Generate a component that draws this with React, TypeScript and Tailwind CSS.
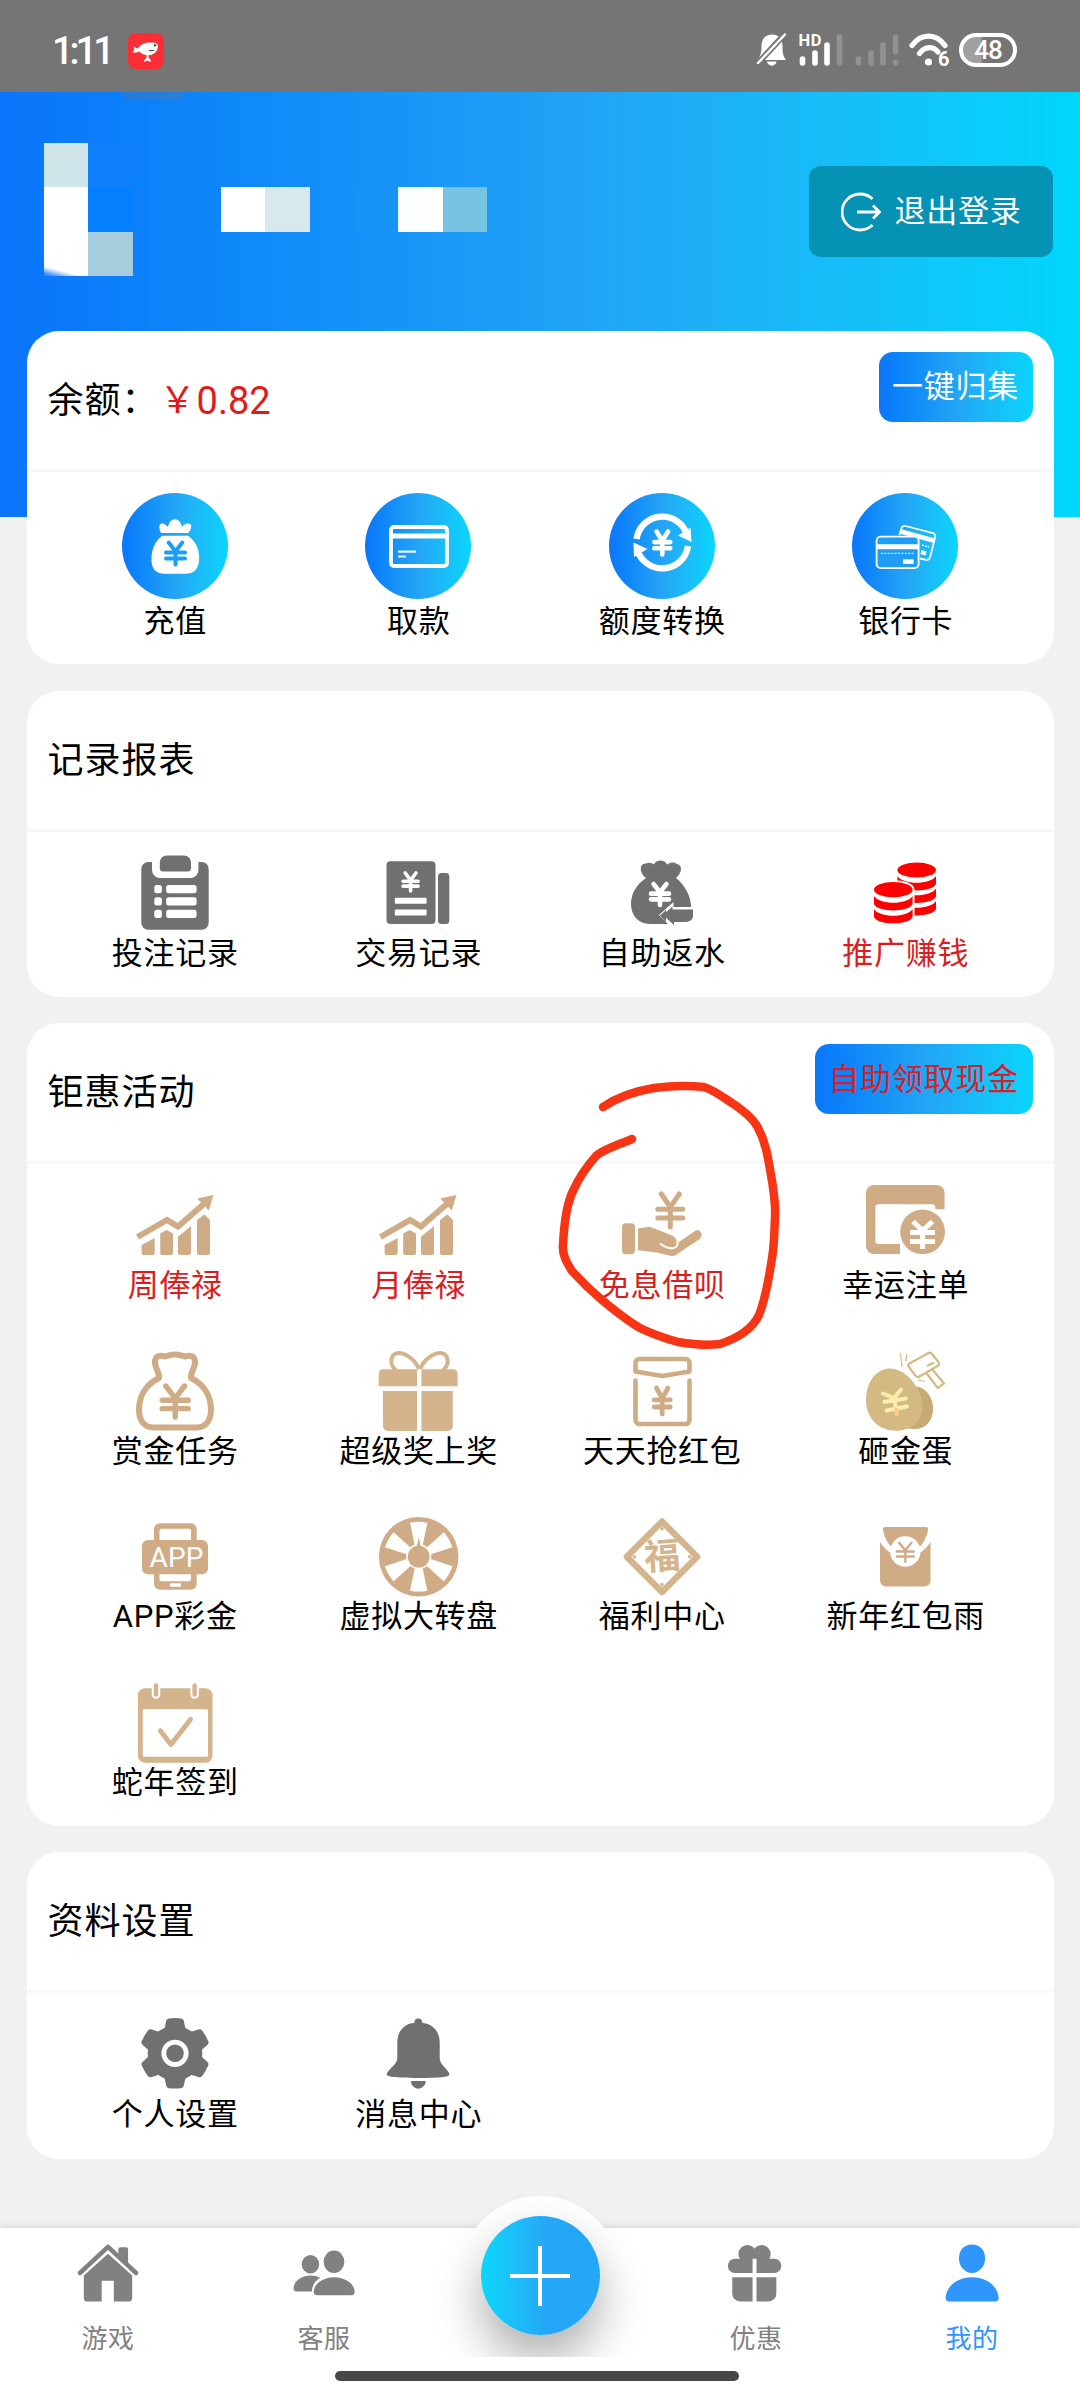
import type { ReactNode } from 'react'

const GRAY = '#707070'
const TAN = '#d0ac86'
const SAND = '#d4b48c'

type Item = { label: string; icon: ReactNode; red?: boolean }

// yen sign drawn as strokes: arms, stem and two bars
function Yen({
  x,
  y,
  w,
  h,
  color,
  stroke,
}: {
  x: number
  y: number
  w: number
  h: number
  color: string
  stroke: number
}) {
  const arm = w * 0.36
  return (
    <path
      d={`M${x - arm} ${y}L${x} ${y + h * 0.4}L${x + arm} ${y}M${x} ${y + h * 0.4}V${y + h}M${x - w / 2} ${y + h * 0.46}H${x + w / 2}M${x - w / 2} ${y + h * 0.73}H${x + w / 2}`}
      stroke={color}
      strokeWidth={stroke}
      strokeLinecap="round"
      strokeLinejoin="round"
      fill="none"
    />
  )
}

function Icon({ children, color = TAN }: { children: ReactNode; color?: string }) {
  return (
    <svg viewBox="0 0 80 80" className="h-20 w-20 overflow-visible" fill={color}>
      {children}
    </svg>
  )
}

function Disc({ children }: { children: ReactNode }) {
  return (
    <div className="h-[106px] w-[106px] rounded-full bg-linear-to-r from-[#0b76fb] via-[#24a4f5] to-[#08d6fb]">
      <svg viewBox="0 0 106 106" className="h-full w-full" fill="none">
        {children}
      </svg>
    </div>
  )
}

function ChartIcon() {
  return (
    <Icon>
      <path d="M2.5 54L32 37L43 43.5L70 20" fill="none" stroke={TAN} strokeWidth="6" />
      <path d="M78.5 12L73.8 27.5L62.2 15.5Z" />
      <path d="M6.6 62L19.7 55V70a2 2 0 0 1-2 2H8.6a2 2 0 0 1-2-2Z" />
      <path d="M25.2 50.5L31.6 47L38 50.5V70a2 2 0 0 1-2 2H27.2a2 2 0 0 1-2-2Z" />
      <path d="M43 53.7L56 43V70a2 2 0 0 1-2 2H45a2 2 0 0 1-2-2Z" />
      <path d="M62 37L69.3 31.5L75 37V70a2 2 0 0 1-2 2H64a2 2 0 0 1-2-2Z" />
    </Icon>
  )
}

function CoinStack({ x, y, bands }: { x: number; y: number; bands: number[] }) {
  return (
    <g>
      <ellipse cx={x} cy={y} rx="19.3" ry="7.6" />
      {bands.map((b) => (
        <path
          key={b}
          d={`M${x - 19.3} ${y + b}C${x - 14} ${y + b + 9} ${x + 14} ${y + b + 9} ${x + 19.3} ${y + b}V${y + b + 8}C${x + 16} ${y + b + 16.5} ${x - 16} ${y + b + 16.5} ${x - 19.3} ${y + b + 8}Z`}
        />
      ))}
    </g>
  )
}

const wallet: Item[] = [
  {
    label: '充值',
    icon: (
      <Disc>
        <path
          d="M39 40C36 34 37 29 42 31C44 32 45 33 46 34C47 29 50 26.3 53 26.3C56 26.3 59 29 60 34C62 31 66 29 69 32C70 35 68 38 66 40Z"
          fill="#fff"
        />
        <path
          d="M40 42.7H66C74 48 78 57 77 68C76 77 71 80.7 64 80.7H42C35 80.7 30 77 29.5 68C29 57 33 48 40 42.7Z"
          fill="#fff"
        />
        <Yen x={53.5} y={49.5} w={19} h={22} color="#1e9df6" stroke={4} />
      </Disc>
    ),
  },
  {
    label: '取款',
    icon: (
      <Disc>
        <rect x="26" y="34" width="56" height="39" rx="3" stroke="#fff" strokeWidth="3.8" />
        <path d="M25 43H82" stroke="#fff" strokeWidth="5" />
        <path d="M33 58.7H51M33 63.5H41" stroke="#e8f7ff" strokeWidth="2.2" />
      </Disc>
    ),
  },
  {
    label: '额度转换',
    icon: (
      <Disc>
        <path
          d="M27.6 46A26 26 0 0 1 78.2 42M79 53A26 26 0 0 1 28.4 57"
          stroke="#fff"
          strokeWidth="6.4"
        />
        <path d="M81.5 34.5L82.5 49L69 42.5ZM25 64L24.5 49.5L38.5 56Z" fill="#fff" />
        <Yen x={53.3} y={38.5} w={16} h={23} color="#fff" stroke={4.6} />
      </Disc>
    ),
  },
  {
    label: '银行卡',
    icon: (
      <Disc>
        <path
          d="M47.5 42L49.6 35Q50.6 32.2 53.5 33L81 40.2Q83.8 41.2 83.2 44L78 64.5Q77 67.5 74 66.8L68 65.5"
          stroke="#fff"
          strokeWidth="1.8"
        />
        <path d="M49 38.5L81.5 47.5" stroke="#fff" strokeWidth="4.6" />
        <path d="M70 52L77 54" stroke="#fff" strokeWidth="1.4" strokeDasharray="2 1" />
        <path d="M69 59L74 60.5" stroke="#fff" strokeWidth="4" />
        <rect x="24.6" y="43.7" width="42" height="31.4" rx="4" fill="#1f9df5" stroke="#fff" strokeWidth="1.8" />
        <path d="M24.6 53.8H66.6" stroke="#fff" strokeWidth="5" />
        <path d="M29 60.3H62" stroke="#d8f0ff" strokeWidth="1.2" strokeDasharray="2 1.4" />
        <path d="M51 68.6H61.6" stroke="#fff" strokeWidth="4.6" />
      </Disc>
    ),
  },
]

const records: Item[] = [
  {
    label: '投注记录',
    icon: (
      <Icon color={GRAY}>
        <rect x="6.3" y="11" width="67.4" height="67.7" rx="7" />
        <path d="M17 9H63.4V19a8 8 0 0 1-8 8H25a8 8 0 0 1-8-8Z" fill="#fff" />
        <path d="M24.8 11a7 7 0 0 1 7-6.5H49a7 7 0 0 1 7 6.5V17a3.5 3.5 0 0 1-3.5 3.5H28.3A3.5 3.5 0 0 1 24.8 17Z" />
        {[34, 46.3, 58.7].map((y) => (
          <g key={y} fill="#fff">
            <rect x="19.3" y={y} width="7.6" height="8.2" rx="2.5" />
            <rect x="31.2" y={y} width="30.4" height="8.2" rx="2.5" />
          </g>
        ))}
      </Icon>
    ),
  },
  {
    label: '交易记录',
    icon: (
      <Icon color={GRAY}>
        <rect x="8.5" y="10.3" width="49" height="62.7" rx="4" />
        <rect x="60" y="22" width="11.3" height="51" rx="3.5" />
        <Yen x={32.6} y={22} w={15} h={18} color="#fff" stroke={3.6} />
        <rect x="16.8" y="46.8" width="31.8" height="6" rx="1" fill="#fff" />
        <rect x="16.8" y="58.5" width="31.8" height="6" rx="1" fill="#fff" />
      </Icon>
    ),
  },
  {
    label: '自助返水',
    icon: (
      <Icon color={GRAY}>
        <path d="M24 27C17 22 17 12 24 12.5C28 10.5 31 13 32 13.5C34 8 43 8 45 13.5C49 10.5 53 11 55 13C61 14 60 22 54 27C63 34 69 46 69 55C69 67 61 73 50 73H28C16 73 9 64 9 53C9 42 15 33 24 27Z" />
        <Yen x={38} y={33} w={18} h={21} color="#fff" stroke={4.6} />
        {/* return arrow, outlined in white over the bag */}
        <path d="M37 64L51.5 51V56H73V76H49Z" fill="#fff" />
        <path d="M41 64L50.5 55.5V58.5H71V66Q70 71 62 71H52V74Z" />
        <path d="M38 64.5L44 59V71Z" />
      </Icon>
    ),
  },
  {
    label: '推广赚钱',
    red: true,
    icon: (
      <Icon color="#fe0000">
        <CoinStack x={51.7} y={19} bands={[6, 18.5, 31]} />
        <path d="M7 38.5C7 26 49.5 26 49.5 38.5V68C49.5 78 7 78 7 68Z" fill="#fff" />
        <CoinStack x={28.3} y={38.7} bands={[6.4, 19.2]} />
      </Icon>
    ),
  },
]

const activities: Item[] = [
  { label: '周俸禄', red: true, icon: <ChartIcon /> },
  { label: '月俸禄', red: true, icon: <ChartIcon /> },
  {
    label: '免息借呗',
    red: true,
    icon: (
      <Icon>
        <Yen x={48.3} y={11} w={25} h={33} color={TAN} stroke={5} />
        <rect x="0" y="40.3" width="13" height="31" rx="4" />
        <path d="M16 45.5L27.6 43.7Q40 48 51 53Q55 56 55.5 60L73 48Q77 45.5 79.3 50Q80.5 54 77 56.5L54 72Q52 73.3 49 73L35 69.5L16 67.3Z" />
        <path d="M55.3 57.5C57.5 67 47 67.5 38 60.5" fill="none" stroke="#fff" strokeWidth="2" />
      </Icon>
    ),
  },
  {
    label: '幸运注单',
    icon: (
      <Icon>
        <path d="M9 2H71.6a8 8 0 0 1 8 8V26.3H70.3V24.3a3 3 0 0 0-3-3H13.4a3 3 0 0 0-3 3V58a3 3 0 0 0 3 3H35V71H9a8 8 0 0 1-8-8V10a8 8 0 0 1 8-8Z" />
        <circle cx="57.6" cy="48.9" r="22.4" />
        <path
          d="M48 38.5L57.6 47.5L67.5 38.5M57.6 47V66M45 49.5H70M45 58.5H70"
          fill="none"
          stroke="#fff"
          strokeWidth="5"
        />
      </Icon>
    ),
  },
  {
    label: '赏金任务',
    icon: (
      <Icon>
        <path
          d="M24 29C14 34 4 44 4 61C4 72 10 78.5 18 78.5H62C70 78.5 76 72 76 61C76 44 66 34 56 29C55.5 22 61 18 60 12C59 6 54 6 50 7.5C46 6.5 44 5.5 40 5.5C36 5.5 34 6.5 30 7.5C26 6 21 6 20 12C19 18 24.5 22 24 29Z"
          fill="none"
          stroke={TAN}
          strokeWidth="6"
          strokeLinejoin="round"
        />
        <Yen x={40.2} y={37} w={26} h={31} color={TAN} stroke={5.4} />
      </Icon>
    ),
  },
  {
    label: '超级奖上奖',
    icon: (
      <Icon color={SAND}>
        <path
          d="M41 20C36 9 26 3.5 20 4C12 5 11 16 18 21M42 20C47 9 57 3.5 63 4C71 5 72 16 65 21"
          fill="none"
          stroke={SAND}
          strokeWidth="4"
        />
        <path d="M39 20.3H5a4.3 4.3 0 0 0-4.3 4.3V37.3H39ZM43.4 20.3H75.3a4.3 4.3 0 0 1 4.3 4.3V37.3H43.4Z" />
        <path d="M39 42H4.9V77a5 5 0 0 0 5 5H39ZM43.4 42H74.8V77a5 5 0 0 1-5 5H43.4Z" />
      </Icon>
    ),
  },
  {
    label: '天天抢红包',
    icon: (
      <Icon>
        <path
          d="M13.5 22.5V14a4 4 0 0 1 4-4H63.5a4 4 0 0 1 4 4V22.5L40.5 27ZM13.5 31.5V71a4 4 0 0 0 4 4H63.5a4 4 0 0 0 4-4V31.5"
          fill="none"
          stroke={TAN}
          strokeWidth="4.6"
          strokeLinecap="round"
          strokeLinejoin="round"
        />
        <Yen x={40.2} y={39} w={16} h={26} color={TAN} stroke={4.8} />
      </Icon>
    ),
  },
  {
    label: '砸金蛋',
    icon: (
      <Icon color="#d3ba83">
        <path d="M48 38C60 36 68 48 68 60C68 72 60 81 48 80L38 79Z" fill="#c7a975" />
        <path d="M21 20C36 17 52 32 57 52C60 68 50 81 32 81.7C14 82 2 70 1 53C0.5 36 8 23 21 20Z" />
        <path
          d="M18 44.5L29 49L36 40.5M29 49L32 64.5M19.5 53L41 49.5M21.5 61.5L42 57.5"
          fill="none"
          stroke="#fcedab"
          strokeWidth="4"
          strokeLinecap="round"
        />
        <path d="M31.3 60.5L32.2 65" stroke="#fbc98a" strokeWidth="4" strokeLinecap="round" />
        <path
          d="M44.5 14.5L63 4.2Q65.5 3 67 5L73.4 13Q75 15.5 72.5 17L54.5 27.5Q52 29 50.5 26.5L43.5 17.5Q42.5 15.5 44.5 14.5ZM61 23.5L72.7 39L79 34.5L67.5 20.5M62 17L69 13.5"
          fill="none"
          stroke="#d3ba83"
          strokeWidth="2.2"
        />
        <path d="M35.5 4L37 18M42 5L40.5 12M53 31L60 32.5" stroke="#d3ba83" strokeWidth="1.2" />
      </Icon>
    ),
  },
  {
    label: 'APP彩金',
    icon: (
      <Icon>
        <rect x="19" y="9.3" width="42.7" height="66.4" rx="6" />
        <rect x="24.5" y="14.7" width="31.5" height="52.6" rx="2" fill="#fff" />
        <rect x="35" y="69.3" width="11" height="3.4" fill="#fff" />
        <rect x="7" y="26" width="66" height="34.3" rx="6" />
        <text
          x="41.5"
          y="53"
          textAnchor="middle"
          textLength="54"
          fontSize="28"
          fill="#fff"
          className="font-['Roboto',sans-serif]"
        >
          APP
        </text>
      </Icon>
    ),
  },
  {
    label: '虚拟大转盘',
    icon: (
      <Icon>
        <circle cx="40.7" cy="42.7" r="39.8" />
        {[0, 60, 120, 180, 240, 300].map((a) => (
          <path
            key={a}
            d="M36.7 31L32 8.7Q40.7 7 49.4 8.7L44.7 31Z"
            fill="#fff"
            transform={`rotate(${a} 40.7 42.7)`}
          />
        ))}
        <circle cx="40.7" cy="42.7" r="12.6" fill="#fff" />
        <circle cx="40.7" cy="42.7" r="10.9" />
        <path d="M40.7 23L42.8 33H38.6Z" />
      </Icon>
    ),
  },
  {
    label: '福利中心',
    icon: (
      <Icon color={SAND}>
        <path
          d="M40 7.5L75.2 42.7L40 77.9L4.8 42.7Z"
          fill="none"
          stroke={SAND}
          strokeWidth="6.4"
          strokeLinejoin="round"
        />
        <circle cx="40" cy="14.8" r="1.8" />
        <circle cx="40" cy="70.6" r="1.8" />
        <circle cx="12.4" cy="42.7" r="1.8" />
        <circle cx="67.8" cy="42.7" r="1.8" />
        <text
          x="40"
          y="55"
          textAnchor="middle"
          fontSize="36"
          fontWeight="700"
          transform="rotate(-4 40 42)"
          className="font-['Noto_Sans_CJK_SC',sans-serif]"
        >
          福
        </text>
      </Icon>
    ),
  },
  {
    label: '新年红包雨',
    icon: (
      <Icon>
        <path d="M20 13H61Q63.5 13 63 16C61.5 25 56 33 50 37H31C25 33 19.5 25 18 16Q17.5 13 20 13Z" />
        <path d="M15 28C18 33 23 38 30 41H50.5C57.5 38 62.5 33 65.5 28V66.5a6 6 0 0 1-6 6H21a6 6 0 0 1-6-6Z" />
        <circle cx="40.3" cy="37.5" r="15.2" fill="#fff" />
        <Yen x={40.3} y={28.7} w={17} h={19} color={TAN} stroke={2.4} />
      </Icon>
    ),
  },
  {
    label: '蛇年签到',
    icon: (
      <Icon color={SAND}>
        <rect x="3" y="8.3" width="74.5" height="74.4" rx="7" />
        <rect x="7.8" y="29.3" width="65.2" height="47.4" rx="1.5" fill="#fff" />
        {[21, 59.6].map((x) => (
          <g key={x} strokeLinecap="round">
            <path d={`M${x} 5.5V14.5`} stroke="#fff" strokeWidth="8.5" />
            <path d={`M${x} 5.5V14.5`} stroke={SAND} strokeWidth="4.4" />
          </g>
        ))}
        <path
          d="M25.5 51L36 64.5L55.5 39.5"
          fill="none"
          stroke={SAND}
          strokeWidth="5"
          strokeLinecap="round"
          strokeLinejoin="round"
        />
      </Icon>
    ),
  },
]

const settings: Item[] = [
  {
    label: '个人设置',
    icon: (
      <Icon color={GRAY}>
        {[0, 60, 120, 180, 240, 300].map((a) => (
          <path
            key={a}
            d="M29 19L31.3 8.5Q31.8 6.7 34 6.4Q40 5.7 46 6.4Q48.2 6.7 48.7 8.5L51 19Z"
            transform={`rotate(${a} 40 41.3)`}
          />
        ))}
        <circle cx="40" cy="41.3" r="27.3" />
        <circle cx="40" cy="41.3" r="11.2" fill={GRAY} stroke="#fff" strokeWidth="4.8" />
      </Icon>
    ),
  },
  {
    label: '消息中心',
    icon: (
      <Icon color={GRAY}>
        <circle cx="40.3" cy="10.5" r="3.9" />
        <path d="M19.3 31C19.3 17 28 10.5 40.3 10.5C52.5 10.5 61.7 17 61.7 31V46C61.7 53 70 57 71.5 62C72 64.5 66 66 40.3 66C15 66 8 64.5 8.7 62C10 57 19.3 53 19.3 46Z" />
        <path d="M33 69H47.6C48 73 44 76.7 40.3 76.7C36.6 76.7 32.6 73 33 69Z" />
      </Icon>
    ),
  },
]

// blocks that cover the user info in the header
const tiles = [
  'col-start-1 row-start-1 bg-[#cfe5ea]',
  'col-start-2 row-start-1 bg-[#127ffb]/50',
  'col-start-1 row-start-2 bg-white',
  'col-start-2 row-start-2 bg-[#0480ff]',
  'col-start-5 row-start-2 bg-white',
  'col-start-6 row-start-2 bg-[#d8e9ed]',
  'col-start-8 row-start-2 bg-[#1896f6]/60',
  'col-start-9 row-start-2 bg-[#fbfdfe]',
  'col-start-10 row-start-2 bg-[#78c2e2]',
  'col-start-1 row-start-3 bg-linear-15 from-[#3d8bf5] from-4% to-white to-18%',
  'col-start-2 row-start-3 bg-[#a5cddd]',
]

function StatusBar() {
  return (
    <div className="flex h-[92px] items-center justify-between bg-[#757575] pt-[9px] pr-[63px] pl-[52px] text-white">
      <div className="flex items-center gap-[19px]">
        <span className="w-[57px] font-['Roboto',sans-serif] text-[38px] leading-none font-medium tracking-[-4px] whitespace-nowrap">
          1:11
        </span>
        <svg viewBox="0 0 36 36" className="h-9 w-9">
          <rect width="36" height="36" rx="8" fill="#fb2d35" />
          <path
            d="M5.5 13.500C7 14 8.500 15.500 10 15.500C12 10.500 19 9 24 9.500C29 9.500 31 12 29.500 15.500C28.500 20 24 23 19 22C15 22 13 19.500 10.500 18.500C8.500 20 6.500 20 4.500 19C6.500 17.500 6.500 15.500 5.500 13.500Z"
            fill="#fff"
          />
          <path
            d="M19.5 21V28M19.5 24.5L16.500 28.500M19.5 24.5L22.500 28.500"
            stroke="#fff"
            strokeWidth="1.8"
          />
          <path d="M26.500 10.500L29 13L25.500 13.500ZM20 17Q23 19.500 27 17" fill="#444" />
        </svg>
      </div>
      <div className="-mt-[2px] flex items-center">
        <svg viewBox="0 0 32 34" className="h-[34px] w-8">
          <path
            d="M16 1.5C8 1.5 5.500 8 5.500 13C5.500 20 4.500 22.500 1.500 27H30C27 22.500 26.500 20 26.500 13C26.500 8 24 1.500 16 1.5ZM11 28.500H20.500C20 34 11.500 34 11 28.500Z"
            fill="#fff"
          />
          <path d="M30 0L1 31" stroke="#757575" strokeWidth="6" />
          <path d="M29 1.5L2 30" stroke="#fff" strokeWidth="2.4" strokeLinecap="round" />
        </svg>
        <svg viewBox="0 0 46 34" className="ml-[10px] h-[34px] w-[46px]" strokeLinecap="round">
          <path d="M4.5 26V30M17 20V30M29 12V30" stroke="#fff" strokeWidth="5.6" />
          <path d="M41.500 4V30" stroke="#929292" strokeWidth="5.6" />
          <text
            x="0.5"
            y="13.2"
            fontSize="16.5"
            fontWeight="700"
            textLength="23"
            fill="#fff"
            className="font-['Roboto',sans-serif]"
          >
            HD
          </text>
        </svg>
        <svg viewBox="0 0 46 34" className="ml-[11px] h-[34px] w-[46px]" strokeLinecap="round">
          <path
            d="M3.5 26V30M16 20V30M28 12V30M40.5 4V19M40.5 29.5V30"
            stroke="#919191"
            strokeWidth="5.6"
          />
        </svg>
        <svg viewBox="0 0 44 40" className="ml-[8px] h-10 w-11" fill="none">
          <path
            d="M3 15.500C12 3 27 3 36 15.500M10.500 23.500C16 16 24 16 29 22"
            stroke="#fff"
            strokeWidth="5.2"
            strokeLinecap="round"
          />
          <circle cx="19.5" cy="32" r="3.6" fill="#fff" />
          <text
            x="29"
            y="35.5"
            fontSize="20"
            fontWeight="700"
            fill="#fff"
            className="font-['Roboto',sans-serif]"
          >
            6
          </text>
        </svg>
        <div className="ml-[6px] flex h-[34px] w-[58px] items-center justify-center rounded-full border-4 border-white bg-linear-to-r from-[#a0a0a0] from-35% to-[#757575] to-40% font-['Roboto',sans-serif] text-[26px] leading-none font-medium tracking-[-1px]">
          48
        </div>
      </div>
    </div>
  )
}

function Label({ children, red }: { children: ReactNode; red?: boolean }) {
  return (
    <span
      className={`-mr-[1px] pt-[1px] text-[31px] leading-[44px] tracking-[0.7px] whitespace-nowrap ${red ? 'text-[#d81e1e]' : ''}`}
    >
      {children}
    </span>
  )
}

function Card({
  title,
  action,
  items,
}: {
  title: ReactNode
  action?: ReactNode
  items: Item[]
}) {
  return (
    <section className="rounded-[32px] bg-white">
      <div className="flex h-[141px] justify-between border-b-3 border-[#f8f8f8] pr-[21px] pl-[21px]">
        <h2 className="h-[138px] text-[36px] leading-[140px] tracking-[1px]">{title}</h2>
        {action}
      </div>
      <div className="grid grid-cols-4 px-[26.5px]">
        {items.map((item) => (
          <div key={item.label} className="flex h-[165.4px] flex-col items-center pt-[19px]">
            {item.icon}
            <Label red={item.red}>{item.label}</Label>
          </div>
        ))}
      </div>
    </section>
  )
}

function NavItem({
  label,
  active,
  children,
}: {
  label: string
  active?: boolean
  children: ReactNode
}) {
  return (
    <div
      className={`flex w-[216px] flex-col items-center pt-[14px] ${active ? 'text-[#2e96fd]' : 'text-[#818181]'}`}
    >
      <svg viewBox="0 0 64 64" className="h-16 w-16" fill="currentColor">
        {children}
      </svg>
      <span className="mt-[17px] text-[26px] leading-9 tracking-[0.6px]">{label}</span>
    </div>
  )
}

function BottomNav() {
  return (
    <nav className="bg-white">
      <div className="relative flex h-[129px] bg-white shadow-[0_-1px_6px_rgba(0,0,0,0.12)] [clip-path:inset(-40px_0_0_0)]">
        <NavItem label="游戏">
          <path
            d="M3 32L32 5L61 32"
            fill="none"
            stroke="currentColor"
            strokeWidth="4.6"
            strokeLinecap="round"
            strokeLinejoin="round"
          />
          <path d="M42.7 12V7.5a2 2 0 0 1 2-2H50.7a2 2 0 0 1 2 2V23Z" />
          <path d="M32 12L57 34.7V57.5a4 4 0 0 1-4 4H38V40H25.5V61.5H11a4 4 0 0 1-4-4V34.7Z" />
        </NavItem>
        <NavItem label="客服">
          <ellipse cx="18" cy="23" rx="9" ry="9.6" />
          <ellipse cx="42.3" cy="20.5" rx="10.7" ry="11.6" />
          <path d="M0.6 48C1 40 9 34.7 18 34.7Q24 34.7 28 37C23 40 20 44 19.5 51H4Q0.6 51 0.6 48Z" />
          <path d="M21.4 51C22 42 32 36.3 42.5 36.3C53 36.3 63 42 63.6 51Q64 55 60 55H25Q21 55 21.4 51Z" />
        </NavItem>
        <div className="relative w-[216px]">
          <div className="absolute top-[-32px] left-[28px] h-40 w-40 rounded-full bg-white" />
          <div className="absolute top-[-12px] left-[48.5px] flex h-[119px] w-[119px] items-center justify-center rounded-full bg-linear-to-r from-[#0bd6fa] to-[#25a7f7] to-55% shadow-[0_24px_48px_rgba(0,0,0,0.32)]">
            <svg viewBox="0 0 60 60" className="h-[60px] w-[60px]">
              <path d="M30 0V60M0 30H60" stroke="#fff" strokeWidth="4" />
            </svg>
          </div>
        </div>
        <NavItem label="优惠">
          <circle cx="23.2" cy="12.5" r="9.4" />
          <circle cx="37.8" cy="12.5" r="9.4" />
          <rect x="3" y="17.3" width="55" height="14.7" rx="7" />
          <path d="M7.5 36.3H53V53a8 8 0 0 1-8 8.300H15.5a8 8 0 0 1-8-8.300Z" />
          <path d="M30.5 17.3V62" stroke="#fff" strokeWidth="4" />
        </NavItem>
        <NavItem label="我的" active>
          <path d="M32 2.7C40 2.7 45.5 8.5 45.5 17C45.5 25.5 39 32 32 32C25 32 18.5 25.5 18.5 17C18.5 8.5 24 2.7 32 2.7Z" />
          <path d="M4.8 57C6 45 17 36.3 32 36.3C47 36.3 58 45 59.5 57Q59.8 61.3 56 61.3H8.5Q4.5 61.3 4.8 57Z" />
        </NavItem>
      </div>
      <div className="flex h-[43px] pt-[14px] pl-[335px]">
        <div className="h-[10px] w-[404px] rounded-full bg-[#474747]" />
      </div>
    </nav>
  )
}

export default function App() {
  return (
    <div className="relative flex h-[2400px] w-[1080px] flex-col overflow-hidden bg-[#f1f1f1] font-['Roboto','Noto_Sans_CJK_SC',sans-serif] text-black">
      <StatusBar />

      <header className="relative flex h-[425px] shrink-0 justify-between bg-linear-to-r from-[#0b74fb] via-[#22a4f5] via-55% to-[#00d6fb] pr-[27px] pl-[44px]">
        <div className="absolute top-0 left-[122px] h-[7px] w-[64px] rounded-b-full bg-[#4a78b0]/60 blur-[2px]" />
        <div className="mt-[51px] grid h-[133px] grid-cols-[repeat(10,44.3px)] grid-rows-3">
          {tiles.map((tile) => (
            <div key={tile} className={tile} />
          ))}
        </div>
        <button className="mt-[74px] flex h-[91px] w-[244px] items-center justify-center gap-[14px] rounded-xl bg-[#0692b4] pt-[1px] text-[31px] tracking-[0.7px] text-white">
          <svg viewBox="0 0 40 40" className="h-10 w-10" fill="none" stroke="#fff" strokeWidth="2.8">
            <path d="M31.5 7A18 18 0 1 0 31.5 33M16 20H38M32 13.5L38.5 20L32 26.5" />
          </svg>
          退出登录
        </button>
      </header>

      <main className="relative -mt-[186px] flex flex-1 flex-col gap-[26.5px] px-[26.5px]">
        <section className="h-[333px] shrink-0 rounded-[32px] bg-white">
          <div className="flex h-[141px] justify-between border-b-3 border-[#f8f8f8] pr-[21px] pl-[21px]">
            <h2 className="flex h-[138px] items-center pt-[2px] text-[36px] tracking-[1px]">
              余额：
              <span className="flex items-center pl-[1px] text-[#e11a1a]">
                ￥<span className="text-[38px] tracking-normal">0.82</span>
              </span>
            </h2>
            <button className="mt-[21px] h-[70px] w-[154px] rounded-[14px] bg-linear-to-r from-[#0b76fb] via-[#22a4f5] to-[#08d6fb] pt-[1px] text-[31px] tracking-[0.7px] text-white">
              一键归集
            </button>
          </div>
          <div className="grid grid-cols-4 px-[26.5px] pt-[21px]">
            {wallet.map((item) => (
              <div key={item.label} className="flex flex-col items-center">
                {item.icon}
                <Label>{item.label}</Label>
              </div>
            ))}
          </div>
        </section>

        <Card title="记录报表" items={records} />
        <Card
          title="钜惠活动"
          items={activities}
          action={
            <button className="mt-[21px] h-[70px] w-[218px] rounded-[14px] bg-linear-to-r from-[#0b76fb] via-[#22a4f5] to-[#08d6fb] pt-[1px] text-[31px] tracking-[0.7px] text-[#d81e2c]">
              自助领取现金
            </button>
          }
        />
        <Card title="资料设置" items={settings} />
      </main>

      <BottomNav />

      {/* hand-drawn marker round 免息借呗 */}
      <svg
        viewBox="555 1078 230 275"
        className="pointer-events-none absolute top-[1078px] left-[555px] h-[275px] w-[230px]"
        fill="none"
      >
        <path
          d="M603 1107C616 1098 636 1091 654 1088C672 1085.5 690 1085.5 704 1087C714 1090 724 1098 735 1105C748 1114 754 1121 757 1126C766 1142 768 1158 771 1175C774 1192 776 1205 775 1218C774 1240 774 1248 772 1258C768 1285 765 1300 759 1315C752 1330 735 1339 720 1344C705 1346 690 1344 678 1342C664 1338 652 1334 640 1328C626 1320 614 1310 602 1300C590 1290 580 1280 572 1271C567 1263 562 1255 563 1245C564 1225 566 1205 573 1191C580 1175 588 1165 596 1156C604 1149 618 1145 632 1139"
          stroke="#f73413"
          strokeWidth="8.5"
          strokeLinecap="round"
          strokeLinejoin="round"
        />
      </svg>
    </div>
  )
}
